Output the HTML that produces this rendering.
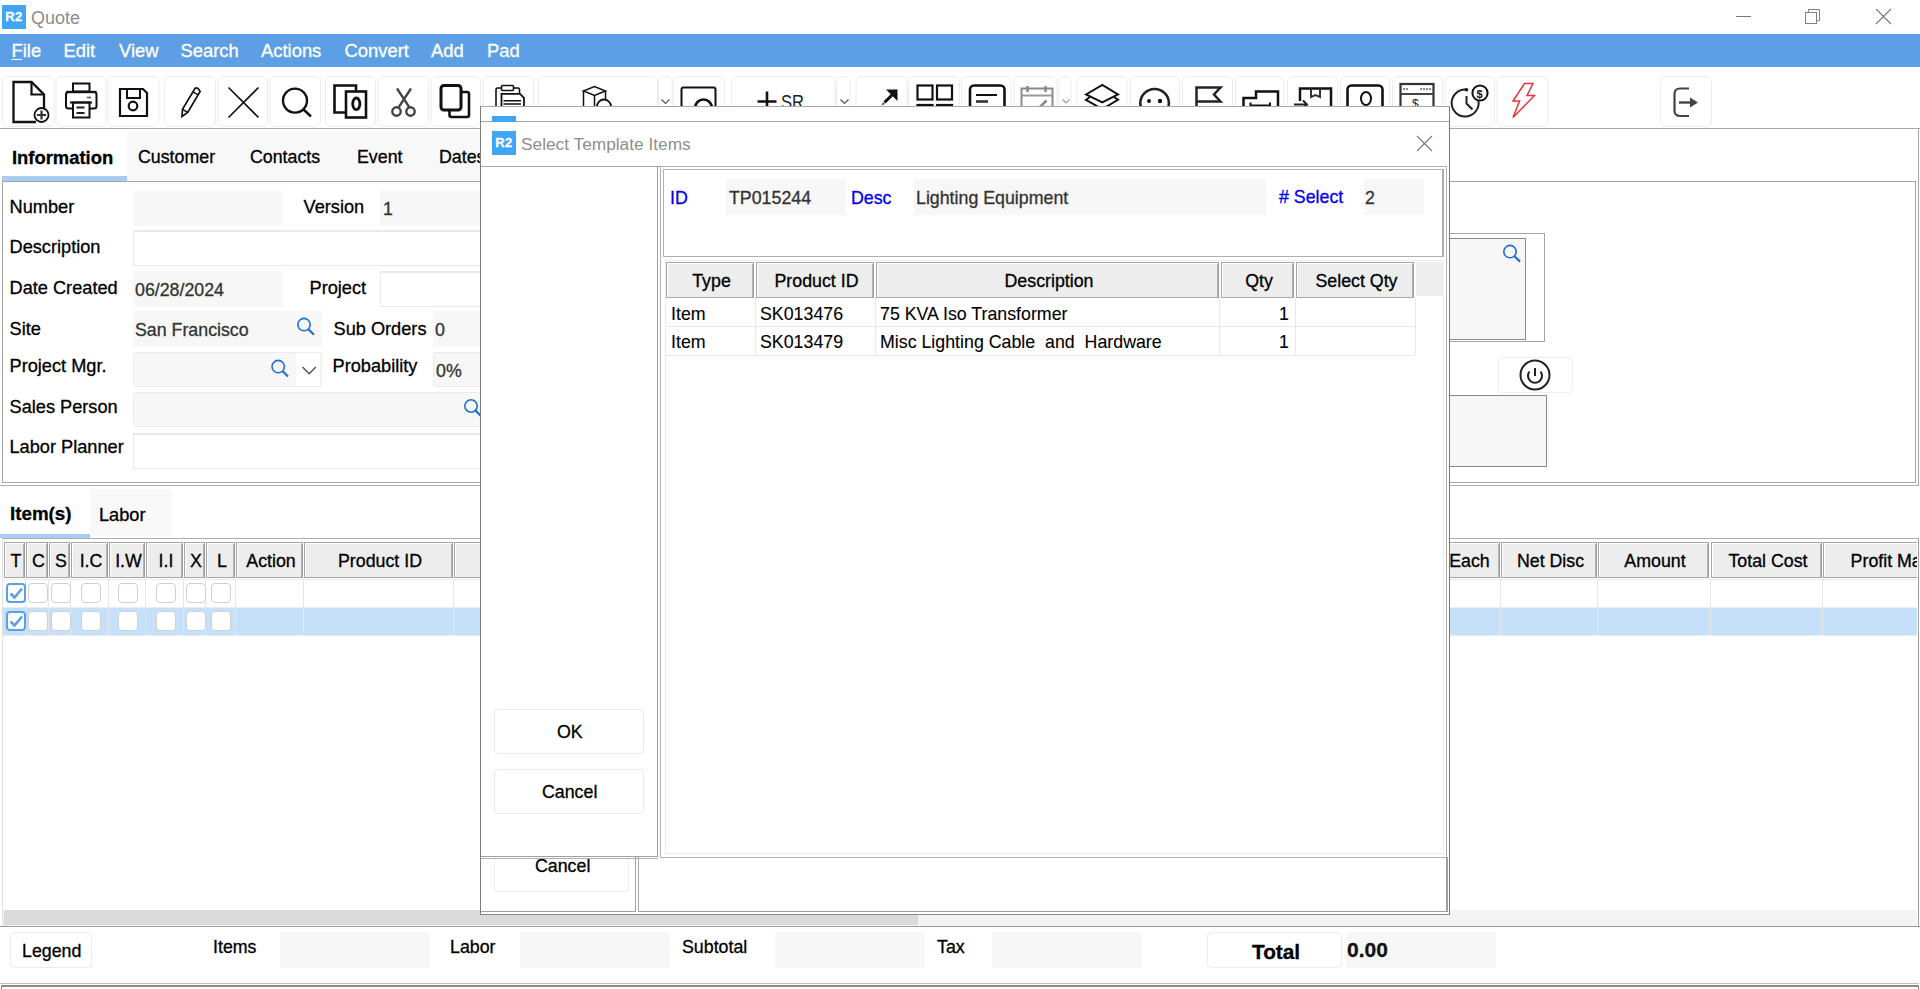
<!DOCTYPE html>
<html><head><meta charset="utf-8">
<style>
html,body{margin:0;padding:0;width:1920px;height:989px;overflow:hidden;background:#fff;}
body{position:relative;font-family:"Liberation Sans",sans-serif;font-size:17.8px;color:#000;-webkit-text-stroke:0.3px currentColor;}
.a{position:absolute;}
.t{position:absolute;white-space:pre;line-height:1;}
.r2{position:absolute;width:24px;height:24px;background:#3ea6f5;color:#fff;font-weight:bold;font-size:13px;line-height:24px;text-align:center;letter-spacing:0.5px;}
.menu .t{color:#fff;top:42px;}
.tb{position:absolute;top:76px;height:49px;border:1px solid #ececec;border-radius:5px;box-sizing:content-box;background:#fff;}
.tb svg{position:absolute;left:0;top:0;}
.tab{position:absolute;background:#f8f8f8;}
.lbl{position:absolute;margin-left:-0.5px;margin-top:-2px;font-size:18.2px;white-space:pre;line-height:1;}
.fld{position:absolute;background:#f7f7f7;height:36px;}
.fldw{position:absolute;background:#fff;height:33px;border:1px solid #e8e9ec;border-top:2px solid #e8e9ec;}
.val{position:absolute;white-space:pre;line-height:1;color:#333;}
.hc{position:absolute;top:542px;height:36px;background:#ededed;border:1px solid #a6a6a6;border-right:1px solid #9a9a9a;box-shadow:inset 1px 1px 0 #fff,inset -1px 0 0 #b4b4b4;box-sizing:border-box;text-align:center;line-height:37px;padding-left:3px;white-space:nowrap;}
.cb{position:absolute;width:18px;height:18px;border:1px solid #d0d0d0;border-radius:4px;background:#fff;}
</style></head><body>

<!-- ===== TITLE BAR ===== -->
<div class="r2" style="left:2px;top:5px;">R2</div>
<div class="t" style="left:31px;top:9px;font-size:18px;color:#8c8c8c;-webkit-text-stroke:0;">Quote</div>
<div class="a" style="left:1736px;top:16px;width:15px;height:1px;background:#777;"></div>
<svg class="a" style="left:1803px;top:7px" width="20" height="20"><rect x="2.5" y="5.5" width="11" height="11" fill="none" stroke="#808080"/><path d="M5.5 5.5V2.5H16.5V13.5H13.5" fill="none" stroke="#808080"/></svg>
<svg class="a" style="left:1875px;top:8px" width="18" height="18"><path d="M1 1L16 16M16 1L1 16" stroke="#777" stroke-width="1.1"/></svg>

<!-- ===== MENU BAR ===== -->
<div class="a menu" style="left:0;top:34px;width:1920px;height:33px;background:#5d9fe4;">
</div>
<div class="menu" style="font-size:18.4px;">
<div class="t" style="left:11.5px;">File</div>
<div class="a" style="left:11px;top:59px;width:11px;height:1px;background:#fff;"></div>
<div class="t" style="left:63.5px;">Edit</div>
<div class="t" style="left:119px;">View</div>
<div class="t" style="left:180.5px;">Search</div>
<div class="t" style="left:261px;">Actions</div>
<div class="t" style="left:344.5px;">Convert</div>
<div class="t" style="left:431px;">Add</div>
<div class="t" style="left:487px;">Pad</div>
</div>

<!-- ===== TOOLBAR ===== -->
<svg class="a" style="left:0;top:0" width="1920" height="130" viewBox="0 0 1920 130">
<rect x="2.5" y="76.5" width="51.5" height="50" rx="5" fill="#fff" stroke="#ececf0" stroke-width="1"/>
<rect x="56" y="76.5" width="50" height="50" rx="5" fill="#fff" stroke="#ececf0" stroke-width="1"/>
<rect x="108" y="76.5" width="51" height="50" rx="5" fill="#fff" stroke="#ececf0" stroke-width="1"/>
<rect x="164.5" y="76.5" width="51.0" height="50" rx="5" fill="#fff" stroke="#ececf0" stroke-width="1"/>
<rect x="218" y="76.5" width="49.5" height="50" rx="5" fill="#fff" stroke="#ececf0" stroke-width="1"/>
<rect x="270" y="76.5" width="50.5" height="50" rx="5" fill="#fff" stroke="#ececf0" stroke-width="1"/>
<rect x="325.5" y="76.5" width="50.0" height="50" rx="5" fill="#fff" stroke="#ececf0" stroke-width="1"/>
<rect x="378" y="76.5" width="50.5" height="50" rx="5" fill="#fff" stroke="#ececf0" stroke-width="1"/>
<rect x="431" y="76.5" width="49.5" height="50" rx="5" fill="#fff" stroke="#ececf0" stroke-width="1"/>
<rect x="483" y="76.5" width="50.5" height="50" rx="5" fill="#fff" stroke="#ececf0" stroke-width="1"/>
<rect x="538.5" y="76.5" width="119.0" height="50" rx="5" fill="#fff" stroke="#ececf0" stroke-width="1"/>
<rect x="658.5" y="76.5" width="13.5" height="50" rx="5" fill="#fff" stroke="#ececf0" stroke-width="1"/>
<rect x="673.5" y="76.5" width="51.0" height="50" rx="5" fill="#fff" stroke="#ececf0" stroke-width="1"/>
<rect x="731.5" y="76.5" width="103.5" height="50" rx="5" fill="#fff" stroke="#ececf0" stroke-width="1"/>
<rect x="836.5" y="76.5" width="13.5" height="50" rx="5" fill="#fff" stroke="#ececf0" stroke-width="1"/>
<rect x="856" y="76.5" width="51" height="50" rx="5" fill="#fff" stroke="#ececf0" stroke-width="1"/>
<rect x="908.5" y="76.5" width="51.0" height="50" rx="5" fill="#fff" stroke="#ececf0" stroke-width="1"/>
<rect x="961.5" y="76.5" width="49.5" height="50" rx="5" fill="#fff" stroke="#ececf0" stroke-width="1"/>
<rect x="1014" y="76.5" width="43" height="50" rx="5" fill="#fff" stroke="#ececf0" stroke-width="1"/>
<rect x="1059" y="76.5" width="12" height="50" rx="5" fill="#fff" stroke="#ececf0" stroke-width="1"/>
<rect x="1077" y="76.5" width="50" height="50" rx="5" fill="#fff" stroke="#ececf0" stroke-width="1"/>
<rect x="1130.5" y="76.5" width="49.0" height="50" rx="5" fill="#fff" stroke="#ececf0" stroke-width="1"/>
<rect x="1182.5" y="76.5" width="50.0" height="50" rx="5" fill="#fff" stroke="#ececf0" stroke-width="1"/>
<rect x="1235.5" y="76.5" width="48.5" height="50" rx="5" fill="#fff" stroke="#ececf0" stroke-width="1"/>
<rect x="1287.5" y="76.5" width="50.0" height="50" rx="5" fill="#fff" stroke="#ececf0" stroke-width="1"/>
<rect x="1340.5" y="76.5" width="49.0" height="50" rx="5" fill="#fff" stroke="#ececf0" stroke-width="1"/>
<rect x="1392.5" y="76.5" width="50.0" height="50" rx="5" fill="#fff" stroke="#ececf0" stroke-width="1"/>
<rect x="1445" y="76.5" width="49.5" height="50" rx="5" fill="#fff" stroke="#ececf0" stroke-width="1"/>
<rect x="1497" y="76.5" width="51" height="50" rx="5" fill="#fff" stroke="#ececf0" stroke-width="1"/>
<rect x="1660.5" y="76.5" width="51.0" height="50" rx="5" fill="#fff" stroke="#ececf0" stroke-width="1"/>

<path d="M36 122H13.5V82H31.5L44 94.5V109" fill="none" stroke="#111" stroke-width="2.3"/>
<path d="M31.5 82V94.5H44" fill="none" stroke="#111" stroke-width="2.2"/>
<circle cx="41.5" cy="115" r="7" fill="#fff" stroke="#111" stroke-width="1.8"/>
<path d="M41.5 110.5V119.5M37 115H46" stroke="#333" stroke-width="2.2"/>

<rect x="73" y="83.5" width="16.5" height="8" fill="none" stroke="#111" stroke-width="2"/>
<path d="M73 108.5H68.5Q66 108.5 66 106V94.5Q66 92 68.5 92H94Q96.5 92 96.5 94.5V106Q96.5 108.5 94 108.5H89.5" fill="none" stroke="#111" stroke-width="2"/>
<path d="M66 92H96.5" stroke="#111" stroke-width="2.4"/>
<rect x="73" y="102.5" width="16.5" height="15" fill="#fff" stroke="#111" stroke-width="2"/>
<path d="M70 102.5H92" stroke="#111" stroke-width="2"/>
<path d="M76.5 107.5H84.5M76.5 113H84.5" stroke="#222" stroke-width="2"/>
<path d="M87 97.5H91" stroke="#555" stroke-width="1.6"/>

<path d="M120 89H143L147 93V116H120Z" fill="none" stroke="#111" stroke-width="2.2"/>
<path d="M127 89V98H140V89" fill="none" stroke="#111" stroke-width="2"/>
<circle cx="133" cy="106" r="4.3" fill="none" stroke="#111" stroke-width="2.2"/>

<path d="M182 116.5L182.5 109.3L194.9 88.5Q197.5 86.5 200.1 91.5L187.7 112.4Z" fill="none" stroke="#111" stroke-width="1.7"/>
<path d="M182.5 109.3L187.7 112.4M192.9 91.9L198.1 94.9" fill="none" stroke="#111" stroke-width="1.4"/>

<path d="M228.5 87.5L258.5 117.5M258.5 87.5L228.5 117.5" fill="none" stroke="#111" stroke-width="1.6"/>

<circle cx="295" cy="100.6" r="12" fill="none" stroke="#111" stroke-width="2.4"/>
<path d="M303.5 109.5L311 116.5" fill="none" stroke="#111" stroke-width="2.4"/>

<path d="M346 112.5H334.5V85.5H356V91" fill="none" stroke="#111" stroke-width="2.6"/>
<rect x="346" y="91.5" width="20" height="26" fill="#fff" stroke="#111" stroke-width="2.6"/>
<ellipse cx="356.3" cy="103.8" rx="3.6" ry="5.8" fill="none" stroke="#111" stroke-width="2.8"/>

<path d="M397 88.5L409.5 107.5M411 88.5L398.5 107.5" stroke="#444" stroke-width="2.3"/>
<circle cx="396.5" cy="111.5" r="4.2" fill="#fff" stroke="#444" stroke-width="2.4"/>
<circle cx="410.5" cy="111.5" r="4.2" fill="#fff" stroke="#444" stroke-width="2.4"/>

<path d="M449.5 110V115Q449.5 117 451.5 117H467Q469 117 469 115V94Q469 92 467 92H461.5" fill="none" stroke="#111" stroke-width="2.6"/>
<rect x="441" y="85.5" width="20" height="24.5" rx="3" fill="#fff" stroke="#111" stroke-width="3"/>

<path d="M496 106V89.5Q496 88 497.5 88H518Q519.5 88 519.5 89.5V94" fill="none" stroke="#111" stroke-width="1.6"/>
<rect x="501.5" y="85.5" width="12" height="5" rx="1" fill="#fff" stroke="#111" stroke-width="1.6"/>
<path d="M501.5 106V93.8H520L524 97.8V106" fill="#fff" stroke="#111" stroke-width="1.8"/>
<path d="M503.5 100.8H521M503.5 104H521" stroke="#111" stroke-width="1.6"/>

<path d="M583.5 91L594.5 86.5L605.5 91L594.5 95.5Z" fill="none" stroke="#111" stroke-width="1.5"/>
<path d="M583.5 91V106M605.5 91V99M594.5 95.5V106" fill="none" stroke="#111" stroke-width="1.5"/>
<circle cx="604" cy="106.5" r="7" fill="#fff" stroke="#111" stroke-width="1.8"/>
<path d="M661.5 99.5L665.5 103.5L669.5 99.5" stroke="#555" stroke-width="1.2" fill="none"/>

<rect x="681.5" y="87.5" width="34" height="24" rx="2" fill="none" stroke="#111" stroke-width="2"/>
<path d="M695 108A8.5 8.5 0 0 1 712 108" fill="#fff" stroke="#111" stroke-width="2.6"/>

<path d="M757.5 101.5H776.5M767 91.5V111" stroke="#111" stroke-width="2.6"/>
<text x="781" y="108.5" font-family="Liberation Sans" font-size="21" fill="#222" textLength="23" lengthAdjust="spacingAndGlyphs">SR</text>
<path d="M840.5 99.5L844.5 103.5L848.5 99.5" stroke="#555" stroke-width="1.2" fill="none"/>

<path d="M886 89.5H897.5V101Z" fill="#111"/>
<path d="M895 92L884.5 102.5" stroke="#111" stroke-width="3"/>
<path d="M884 103L868 119" stroke="#333" stroke-width="1.6" stroke-dasharray="2.5 2"/>

<rect x="917.5" y="85.5" width="15" height="14" fill="none" stroke="#111" stroke-width="2.2"/>
<rect x="937" y="85.5" width="15" height="14" fill="none" stroke="#111" stroke-width="2.2"/>
<rect x="917.5" y="105" width="15" height="14" fill="none" stroke="#111" stroke-width="2.2"/>
<rect x="937" y="105" width="15" height="14" fill="none" stroke="#111" stroke-width="2.2"/>

<rect x="970" y="85.5" width="34.5" height="30" rx="4" fill="none" stroke="#111" stroke-width="2.6"/>
<path d="M976 95H997" stroke="#111" stroke-width="2"/>
<path d="M976 101.5H988" stroke="#333" stroke-width="2.6"/>

<rect x="1021.5" y="88.5" width="31" height="28" fill="none" stroke="#8a8a8a" stroke-width="2"/>
<path d="M1021.5 95.5H1052.5" stroke="#999" stroke-width="2"/>
<path d="M1027.5 86V92M1045.5 86V92" stroke="#888" stroke-width="2.5"/>
<path d="M1031 107L1036 111L1046.5 100.5" fill="none" stroke="#8a8a8a" stroke-width="2.6"/>
<path d="M1062.5 99.5L1066 103L1069.5 99.5" stroke="#999" stroke-width="1.2" fill="none"/>

<path d="M1086 94.5L1102.3 85L1118 94.5L1102.3 102.5Z" fill="none" stroke="#111" stroke-width="2"/>
<path d="M1090 97L1086 99.8L1102.3 109L1118 99.8L1114 97" fill="none" stroke="#111" stroke-width="2"/>

<circle cx="1154.6" cy="103.3" r="14.3" fill="none" stroke="#222" stroke-width="2.6"/>
<circle cx="1149" cy="101" r="2" fill="#111"/><circle cx="1160" cy="101" r="2.2" fill="#111"/>

<path d="M1196.5 120V87.5H1220.5L1214 94.5L1220.5 101.5H1196.5" fill="none" stroke="#222" stroke-width="2.5"/>

<path d="M1243.5 118V98H1256V91.5H1278V118" fill="none" stroke="#111" stroke-width="2.5"/>
<path d="M1250.5 102.5V105.5H1270V102.5" fill="none" stroke="#111" stroke-width="2"/>

<path d="M1300 101V88.5H1331V118M1300 108V118" fill="none" stroke="#111" stroke-width="2.5"/>
<path d="M1311 88.5V97L1315.5 95L1320 97V88.5" fill="none" stroke="#333" stroke-width="2"/>
<path d="M1294 104.5H1307M1303 100.5L1307 104.5L1303 108.5" fill="none" stroke="#222" stroke-width="2"/>

<rect x="1347.5" y="85.5" width="35" height="31" rx="4" fill="none" stroke="#111" stroke-width="2.6"/>
<ellipse cx="1366" cy="98.5" rx="5" ry="6.5" fill="none" stroke="#111" stroke-width="2"/>

<rect x="1400.5" y="84" width="33" height="34" fill="none" stroke="#333" stroke-width="2.2"/>
<path d="M1400.5 94H1433.5" stroke="#444" stroke-width="2"/>
<path d="M1403 89H1409M1420 89H1431" stroke="#666" stroke-width="1.6" stroke-dasharray="2 1"/>
<text x="1412" y="108" font-family="Liberation Sans" font-size="12" fill="#222">$</text>

<path d="M1466 89.5A13.5 13.5 0 1 0 1478.5 101" fill="none" stroke="#222" stroke-width="2"/>
<path d="M1466.5 96V103.5L1472.5 109.5" fill="none" stroke="#222" stroke-width="2"/>
<circle cx="1466.5" cy="89.8" r="1.8" fill="#111"/>
<circle cx="1480" cy="93" r="7.6" fill="#fff" stroke="#111" stroke-width="2"/>
<text x="1476.5" y="97.5" font-family="Liberation Sans" font-size="11" font-weight="bold" fill="#111">$</text>

<path d="M1524.5 83.5H1533L1527 95.5H1534.5L1513 117.5L1519.5 101H1513Z" fill="none" stroke="#e8343a" stroke-width="1.5"/>

<path d="M1689 88.5H1680Q1674.5 88.5 1674.5 94V110.5Q1674.5 116 1680 116H1689" fill="none" stroke="#444" stroke-width="2.2"/>
<path d="M1679 102.5H1692" stroke="#444" stroke-width="2.4"/>
<path d="M1690 97.5L1698 102.5L1690 107.5Z" fill="#444"/>

</svg>
<div class="a" style="left:0;top:128px;width:1920px;height:1px;background:#a8a8a8;"></div>

<!-- ===== TABS ===== -->
<div class="tab" style="left:127px;top:131px;width:301px;height:50px;"></div>
<div class="tab" style="left:428px;top:131px;width:60px;height:50px;"></div>
<div class="a" style="left:2px;top:176px;width:125px;height:5px;background:#a9cdf1;"></div>
<div class="t" style="left:12px;top:148.5px;font-weight:bold;font-size:18.4px;">Information</div>
<div class="t" style="left:138px;top:149px;">Customer</div>
<div class="t" style="left:250px;top:149px;">Contacts</div>
<div class="t" style="left:357px;top:149px;">Event</div>
<div class="t" style="left:439px;top:149px;">Dates</div>

<!-- tab content box -->
<div class="a" style="left:2px;top:181px;width:1912px;height:300px;border:1px solid #a5a5a5;border-right:1px solid #a0a0a0;"></div>
<div class="a" style="left:1918px;top:128px;width:1px;height:358px;background:#a8a8a8;"></div>

<!-- form -->
<div class="lbl" style="left:10px;top:200px;">Number</div>
<div class="fld" style="left:133px;top:190px;width:150px;"></div>
<div class="lbl" style="left:304px;top:200px;">Version</div>
<div class="fld" style="left:380px;top:190px;width:120px;"></div>
<div class="val" style="left:383px;top:201px;">1</div>

<div class="lbl" style="left:10px;top:240px;">Description</div>
<div class="fldw" style="left:133px;top:230px;width:400px;"></div>

<div class="lbl" style="left:10px;top:281px;">Date Created</div>
<div class="fld" style="left:133px;top:271px;width:150px;"></div>
<div class="val" style="left:135px;top:282px;">06/28/2024</div>
<div class="lbl" style="left:310px;top:281px;">Project</div>
<div class="fldw" style="left:380px;top:271px;width:120px;"></div>

<div class="lbl" style="left:10px;top:322px;">Site</div>
<div class="fld" style="left:133px;top:311px;width:189px;"></div>
<div class="val" style="left:135px;top:322px;">San Francisco</div>
<div class="lbl" style="left:334px;top:322px;">Sub Orders</div>
<div class="fld" style="left:433px;top:311px;width:67px;"></div>
<div class="val" style="left:435px;top:322px;">0</div>

<div class="lbl" style="left:10px;top:359px;">Project Mgr.</div>
<div class="a" style="left:133px;top:352px;width:187px;height:33px;border:1px solid #ececec;border-radius:3px;background:#f7f7f7;"></div>
<div class="a" style="left:296px;top:353px;width:24px;height:33px;background:#fff;"></div>
<div class="lbl" style="left:333px;top:359px;">Probability</div>
<div class="a" style="left:433px;top:352px;width:67px;height:33px;border:1px solid #ececec;border-radius:3px;background:#f7f7f7;"></div>
<div class="val" style="left:436px;top:363px;">0%</div>

<div class="lbl" style="left:10px;top:400px;">Sales Person</div>
<div class="a" style="left:133px;top:392px;width:400px;height:33px;border:1px solid #ececec;border-radius:3px;background:#f7f7f7;"></div>

<div class="lbl" style="left:10px;top:440px;">Labor Planner</div>
<div class="fldw" style="left:133px;top:433px;width:400px;"></div>


<svg class="a" style="left:0;top:0;overflow:visible" width="1" height="1">
<g fill="none" stroke="#1f6fd2" stroke-width="1.6">
<circle cx="304" cy="324.6" r="6.2"/><path d="M308.5 329.2L314 334.8" stroke-width="2.2"/>
<circle cx="278.2" cy="366.6" r="6.2"/><path d="M282.7 371.2L288 376.6" stroke-width="2.2"/>
<circle cx="471" cy="406" r="6.2"/><path d="M475.5 410.6L481 416" stroke-width="2.2"/>
</g>
<path d="M302.5 367L309.2 373.7L315.9 367" fill="none" stroke="#555" stroke-width="1.5"/>
</svg>

<!-- right side main-window parts -->
<div class="a" style="left:1440px;top:233px;width:104px;height:107px;border:1px solid #a5a5a5;border-left:none;"></div>
<div class="a" style="left:1440px;top:238px;width:85px;height:100px;border:1px solid #8a8a8a;border-left:none;background:#f6f6f6;"></div>
<svg class="a" style="left:1500px;top:240px" width="30" height="30"><g fill="none" stroke="#1f6fd2" stroke-width="1.6"><circle cx="10" cy="11.6" r="6.2"/><path d="M14.5 16.2L20 21.6" stroke-width="2.2"/></g></svg>
<div class="a" style="left:1498px;top:357px;width:73px;height:34px;border:1px solid #efefef;border-radius:4px;background:#fff;"></div>
<svg class="a" style="left:1518px;top:358px" width="34" height="34"><circle cx="17" cy="17" r="14.5" fill="none" stroke="#222" stroke-width="2"/><path d="M11.5 13.5A7 7 0 1 0 22.5 13.5" fill="none" stroke="#222" stroke-width="2"/><path d="M17 10V18" stroke="#222" stroke-width="2"/></svg>
<div class="a" style="left:1440px;top:395px;width:106px;height:70px;border:1px solid #8a8a8a;border-left:none;background:#f6f6f6;"></div>

<div class="a" style="left:0;top:485px;width:1919px;height:1px;background:#b0b0b0;"></div>

<!-- ===== ITEM TABS ===== -->
<div class="tab" style="left:90px;top:489px;width:82px;height:47px;"></div>
<div class="a" style="left:0;top:534px;width:90px;height:4px;background:#a9cdf1;"></div>
<div class="t" style="left:10px;top:504.5px;font-weight:bold;font-size:18.8px;">Item(s)</div>
<div class="t" style="left:99px;top:506px;font-size:18.2px;">Labor</div>

<!-- grid box -->
<div class="a" style="left:2px;top:538px;width:1915px;height:388px;border-top:1px solid #b0b0b0;border-left:1px solid #e0e0e0;border-right:1px solid #a0a0a0;"></div>
<div class="a" style="left:3px;top:607px;width:1914px;height:28px;background:#c6e0fa;"></div>
<div class="a" style="left:3px;top:579px;width:1914px;height:1px;background:#ececec;"></div>
<div class="a" style="left:3px;top:607px;width:1914px;height:1px;background:#ececec;"></div>
<div class="a" style="left:3px;top:635px;width:1914px;height:1px;background:#ececec;"></div>
<div class="a" style="left:25px;top:579px;width:1px;height:57px;background:#e6e6e6;"></div>
<div class="a" style="left:48px;top:579px;width:1px;height:57px;background:#e6e6e6;"></div>
<div class="a" style="left:70px;top:579px;width:1px;height:57px;background:#e6e6e6;"></div>
<div class="a" style="left:108px;top:579px;width:1px;height:57px;background:#e6e6e6;"></div>
<div class="a" style="left:145px;top:579px;width:1px;height:57px;background:#e6e6e6;"></div>
<div class="a" style="left:183px;top:579px;width:1px;height:57px;background:#e6e6e6;"></div>
<div class="a" style="left:205px;top:579px;width:1px;height:57px;background:#e6e6e6;"></div>
<div class="a" style="left:235px;top:579px;width:1px;height:57px;background:#e6e6e6;"></div>
<div class="a" style="left:303px;top:579px;width:1px;height:57px;background:#e6e6e6;"></div>
<div class="a" style="left:452.5px;top:579px;width:1px;height:57px;background:#e6e6e6;"></div>
<div class="a" style="left:1500px;top:579px;width:1px;height:57px;background:#e6e6e6;"></div>
<div class="a" style="left:1597px;top:579px;width:1px;height:57px;background:#e6e6e6;"></div>
<div class="a" style="left:1709.5px;top:579px;width:1px;height:57px;background:#e6e6e6;"></div>
<div class="a" style="left:1822px;top:579px;width:1px;height:57px;background:#e6e6e6;"></div>
<div class="a" style="left:3px;top:538px;width:1914px;height:388px;overflow:hidden;">
<div class="hc" style="left:1px;top:4px;width:21px;">T</div>
<div class="hc" style="left:23px;top:4px;width:22px;">C</div>
<div class="hc" style="left:46px;top:4px;width:21px;">S</div>
<div class="hc" style="left:68px;top:4px;width:37px;">I.C</div>
<div class="hc" style="left:106px;top:4px;width:36px;">I.W</div>
<div class="hc" style="left:143px;top:4px;width:37px;">I.I</div>
<div class="hc" style="left:181px;top:4px;width:21px;">X</div>
<div class="hc" style="left:203px;top:4px;width:29px;">L</div>
<div class="hc" style="left:233px;top:4px;width:67px;">Action</div>
<div class="hc" style="left:301px;top:4px;width:149px;">Product ID</div>
<div class="hc" style="left:451px;top:4px;width:147px;"></div>
<div class="hc" style="left:1433px;top:4px;width:64px;">Each</div>
<div class="hc" style="left:1498px;top:4px;width:96px;">Net Disc</div>
<div class="hc" style="left:1595px;top:4px;width:111px;">Amount</div>
<div class="hc" style="left:1708px;top:4px;width:111px;">Total Cost</div>
<div class="hc" style="left:1820px;top:4px;width:153px;">Profit Margin</div>
</div>
<div class="a" style="left:6px;top:583px;width:16px;height:16px;border:2px solid #5b9fe6;border-radius:4px;background:#fff;"></div>
<svg class="a" style="left:6px;top:583px" width="20" height="21"><path d="M4.5 10.5L8.5 14.5L16 5.5" fill="none" stroke="#5b9fe6" stroke-width="2.6"/></svg>
<div class="cb" style="left:28px;top:583px;"></div>
<div class="cb" style="left:51px;top:583px;"></div>
<div class="cb" style="left:81px;top:583px;"></div>
<div class="cb" style="left:118px;top:583px;"></div>
<div class="cb" style="left:156px;top:583px;"></div>
<div class="cb" style="left:186px;top:583px;"></div>
<div class="cb" style="left:211px;top:583px;"></div>
<div class="a" style="left:6px;top:611px;width:16px;height:16px;border:2px solid #5b9fe6;border-radius:4px;background:#fff;"></div>
<svg class="a" style="left:6px;top:611px" width="20" height="21"><path d="M4.5 10.5L8.5 14.5L16 5.5" fill="none" stroke="#5b9fe6" stroke-width="2.6"/></svg>
<div class="cb" style="left:28px;top:611px;"></div>
<div class="cb" style="left:51px;top:611px;"></div>
<div class="cb" style="left:81px;top:611px;"></div>
<div class="cb" style="left:118px;top:611px;"></div>
<div class="cb" style="left:156px;top:611px;"></div>
<div class="cb" style="left:186px;top:611px;"></div>
<div class="cb" style="left:211px;top:611px;"></div>

<!-- scrollbar -->
<div class="a" style="left:3px;top:910px;width:1914px;height:16px;background:#f3f3f3;"></div>
<div class="a" style="left:4px;top:910px;width:914px;height:15px;background:#dadada;"></div>
<div class="a" style="left:0;top:926px;width:1920px;height:1px;background:#9a9a9a;"></div>

<!-- ===== STATUS BAR ===== -->
<div class="a" style="left:10px;top:932px;width:80px;height:34px;border:1px solid #ececec;border-radius:4px;"></div>
<div class="t" style="left:22px;top:943px;">Legend</div>
<div class="t" style="left:213px;top:939px;">Items</div>
<div class="fld" style="left:280px;top:932px;width:150px;"></div>
<div class="t" style="left:450px;top:939px;">Labor</div>
<div class="fld" style="left:520px;top:932px;width:150px;"></div>
<div class="t" style="left:682px;top:939px;">Subtotal</div>
<div class="fld" style="left:775px;top:932px;width:150px;"></div>
<div class="t" style="left:937px;top:939px;">Tax</div>
<div class="fld" style="left:992px;top:932px;width:150px;"></div>
<div class="a" style="left:1207px;top:932px;width:133px;height:34px;border:1px solid #ececec;border-radius:4px;"></div>
<div class="t" style="left:1252px;top:942px;font-weight:bold;font-size:20.8px;">Total</div>
<div class="fld" style="left:1346px;top:932px;width:150px;"></div>
<div class="t" style="left:1347px;top:939px;font-weight:bold;font-size:21px;color:#111;">0.00</div>
<div class="a" style="left:0;top:983px;width:1919px;height:1px;background:#c0c0c0;"></div>
<div class="a" style="left:1px;top:985px;width:1918px;height:4px;border-top:2px solid #8a8a8a;border-left:1px solid #8a8a8a;border-right:1px solid #8a8a8a;box-sizing:border-box;"></div>

<!-- ===== DIALOG ===== -->
<div class="a" style="left:480px;top:106px;width:968px;height:807px;background:#fff;border:1px solid #a8a8a8;border-left:1px solid #7c7c7c;border-right:1px solid #7a7a7a;border-bottom:1px solid #8a8a8a;"></div>
<div class="a" style="left:481px;top:121px;width:968px;height:1px;background:#a5a5a5;"></div>
<div class="a" style="left:492px;top:116px;width:24px;height:6px;background:#3ea6f5;"></div>
<div class="r2" style="left:492px;top:131px;">R2</div>
<div class="t" style="left:521px;top:136px;font-size:17.3px;color:#8e8e8e;-webkit-text-stroke:0;">Select Template Items</div>
<svg class="a" style="left:1416px;top:135px" width="18" height="18"><path d="M1 1L16 16M16 1L1 16" stroke="#777" stroke-width="1.1"/></svg>
<div class="a" style="left:481px;top:166px;width:966px;height:1px;background:#a5a5a5;"></div>

<!-- stale lower layer -->
<div class="a" style="left:494px;top:857px;width:133px;height:34px;border:1px solid #ececec;border-top:none;border-radius:0 0 4px 4px;background:#fff;"></div>
<div class="t" style="left:535px;top:858px;">Cancel</div>
<div class="a" style="left:635px;top:857px;width:1px;height:55px;background:#a0a0a0;"></div>
<div class="a" style="left:638px;top:857px;width:807px;height:54px;border:1px solid #a8a8a8;border-top:none;border-right:2px solid #a0a0a0;border-bottom:1px solid #a0a0a0;"></div>
<div class="a" style="left:481px;top:911px;width:155px;height:1px;background:#a0a0a0;"></div>

<!-- left panel -->
<div class="a" style="left:657px;top:167px;width:1px;height:690px;background:#a0a0a0;"></div>
<div class="a" style="left:481px;top:856px;width:177px;height:1px;background:#a0a0a0;"></div>
<div class="a" style="left:481px;top:858px;width:177px;height:1px;background:#b0b0b0;"></div>
<div class="a" style="left:494px;top:709px;width:148px;height:43px;border:1px solid #e9e9e9;border-radius:4px;"></div>
<div class="t" style="left:557px;top:724px;">OK</div>
<div class="a" style="left:494px;top:769px;width:148px;height:43px;border:1px solid #e9e9e9;border-radius:4px;"></div>
<div class="t" style="left:542px;top:784px;">Cancel</div>

<!-- right panel -->
<div class="a" style="left:660px;top:166px;width:785px;height:690px;border:1px solid #b0b0b0;"></div>
<!-- group box -->
<div class="a" style="left:663px;top:169px;width:778px;height:86px;border:1px solid #b0b0b0;border-right:2px solid #acacac;"></div>
<div class="t" style="left:670px;top:190px;color:#0000f0;">ID</div>
<div class="fld" style="left:726px;top:179px;width:120px;"></div>
<div class="val" style="left:729px;top:190px;">TP015244</div>
<div class="t" style="left:851px;top:190px;color:#0000f0;">Desc</div>
<div class="fld" style="left:914px;top:179px;width:352px;"></div>
<div class="val" style="left:916px;top:190px;">Lighting Equipment</div>
<div class="t" style="left:1279px;top:189px;color:#0000f0;"># Select</div>
<div class="fld" style="left:1364px;top:179px;width:60px;"></div>
<div class="val" style="left:1365px;top:190px;">2</div>

<!-- dialog grid -->
<div class="a" style="left:665px;top:260px;width:779px;height:1px;background:#eceef2;"></div>
<div class="a" style="left:665px;top:260px;width:1px;height:594px;background:#e8eaee;"></div>
<div class="a" style="left:1443px;top:260px;width:1px;height:594px;background:#eceef2;"></div>
<div class="a" style="left:665px;top:853px;width:779px;height:1px;background:#e8eaee;"></div>
<div class="a" style="left:1416px;top:262px;width:27px;height:34px;background:#eeeeee;"></div>
<div class="hc" style="left:666px;top:262px;width:88px;">Type</div>
<div class="hc" style="left:756px;top:262px;width:118px;">Product ID</div>
<div class="hc" style="left:876px;top:262px;width:343px;">Description</div>
<div class="hc" style="left:1221px;top:262px;width:73px;">Qty</div>
<div class="hc" style="left:1296px;top:262px;width:118px;">Select Qty</div>
<div class="a" style="left:666px;top:326px;width:749px;height:1px;background:#e8e8e8;"></div>
<div class="a" style="left:666px;top:355px;width:749px;height:1px;background:#e8e8e8;"></div>
<div class="a" style="left:755px;top:297px;width:1px;height:58px;background:#e8e8e8;"></div>
<div class="a" style="left:875px;top:297px;width:1px;height:58px;background:#e8e8e8;"></div>
<div class="a" style="left:1219px;top:297px;width:1px;height:58px;background:#e8e8e8;"></div>
<div class="a" style="left:1295px;top:297px;width:1px;height:58px;background:#e8e8e8;"></div>
<div class="a" style="left:1415px;top:297px;width:1px;height:58px;background:#e8e8e8;"></div>
<div class="t" style="left:671px;top:306px;-webkit-text-stroke:0.1px currentColor;">Item</div>
<div class="t" style="left:760px;top:306px;-webkit-text-stroke:0.1px currentColor;">SK013476</div>
<div class="t" style="left:880px;top:306px;-webkit-text-stroke:0.1px currentColor;">75 KVA Iso Transformer</div>
<div class="t" style="left:1279px;top:306px;-webkit-text-stroke:0.1px currentColor;">1</div>
<div class="t" style="left:671px;top:334px;-webkit-text-stroke:0.1px currentColor;">Item</div>
<div class="t" style="left:760px;top:334px;-webkit-text-stroke:0.1px currentColor;">SK013479</div>
<div class="t" style="left:880px;top:334px;-webkit-text-stroke:0.1px currentColor;">Misc Lighting Cable  and  Hardware</div>
<div class="t" style="left:1279px;top:334px;-webkit-text-stroke:0.1px currentColor;">1</div>

</body></html>
